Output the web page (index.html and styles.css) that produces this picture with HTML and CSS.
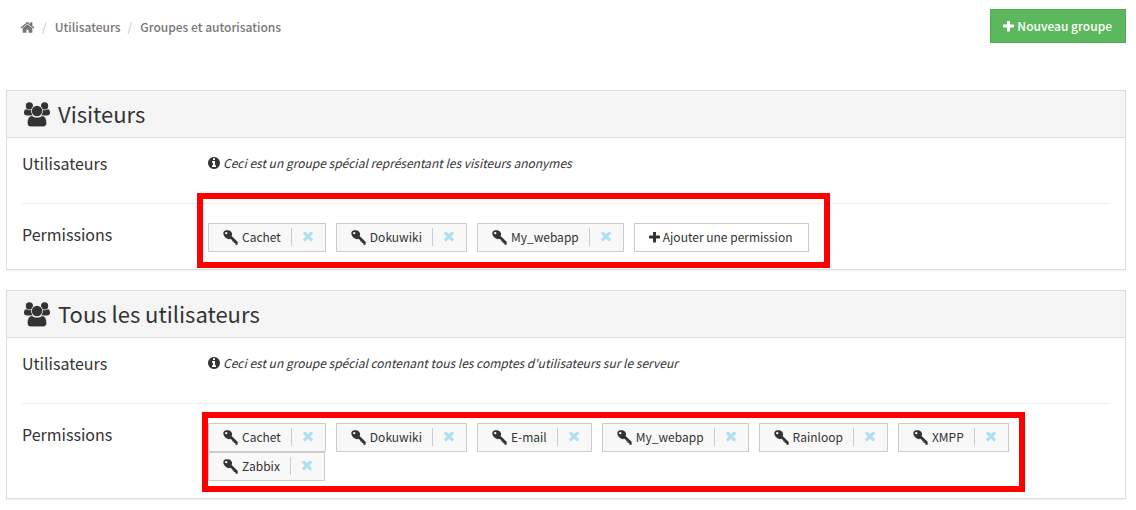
FILE: index.html
```html
<!DOCTYPE html>
<html lang="fr">
<head>
<meta charset="utf-8">
<meta name="viewport" content="width=device-width, initial-scale=1">
<title>Groupes et autorisations</title>
<link rel="stylesheet" href="styles.css">
</head>
<body>
<svg class="sprite" aria-hidden="true">
  <symbol id="home" viewBox="0 0 1792 1792"><path d="M1472 992v480q0 26-19 45t-45 19h-384v-384h-256v384h-384q-26 0-45-19t-19-45v-480q0-1 .5-3t.5-3l575-474 575 474q1 2 1 6zm223-69l-62 74q-8 9-21 11h-3q-13 0-21-7l-692-577-692 577q-12 8-24 7-13-2-21-11l-62-74q-8-10-7-23.500t11-21.500l719-599q32-26 76-26t76 26l244 204v-195q0-14 9-23t23-9h192q14 0 23 9t9 23v408l219 182q10 8 11 21.500t-7 23.500z"/></symbol>
  <symbol id="plus" viewBox="192 192 1408 1408"><path d="M1600 736v192q0 40-28 68t-68 28h-416v416q0 40-28 68t-68 28h-192q-40 0-68-28t-28-68v-416h-416q-40 0-68-28t-28-68v-192q0-40 28-68t68-28h416v-416q0-40 28-68t68-28h192q40 0 68 28t28 68v416h416q40 0 68 28t28 68z"/></symbol>
  <symbol id="times" viewBox="302 434 1188 1188"><path d="M1490 1322q0 40-28 68l-136 136q-28 28-68 28t-68-28l-294-294-294 294q-28 28-68 28t-68-28l-136-136q-28-28-28-68t28-68l294-294-294-294q-28-28-28-68t28-68l136-136q28-28 68-28t68 28l294 294 294-294q28-28 68-28t68 28l136 136q28 28 28 68t-28 68l-294 294 294 294q28 28 28 68z"/></symbol>
  <symbol id="info" viewBox="128 128 1536 1536"><path d="M1152 1376v-160q0-14-9-23t-23-9h-96v-512q0-14-9-23t-23-9h-320q-14 0-23 9t-9 23v160q0 14 9 23t23 9h96v320h-96q-14 0-23 9t-9 23v160q0 14 9 23t23 9h448q14 0 23-9t9-23zm-128-896v-160q0-14-9-23t-23-9h-192q-14 0-23 9t-9 23v160q0 14 9 23t23 9h192q14 0 23-9t9-23zm640 416q0 209-103 385.500t-279.500 279.500-385.500 103-385.500-103-279.500-279.500-103-385.500 103-385.500 279.500-279.500 385.500-103 385.500 103 279.500 279.500 103 385.500z"/></symbol>
  <symbol id="key" viewBox="0 0 15 15"><path fill-rule="evenodd" d="M4.200.3C6.300-.2 8.600 1.300 9 3.600c.2.900 0 1.600-.4 2.300l5.700 5.700c.4.400.4.600.4 1v1.300c0 .6-.3.800-.8.800h-1c-.5 0-.6-.2-.6-.6v-1l-1.100-.1c-.4 0-.5-.2-.5-.6v-.9l-1-.1c-.4 0-.5-.2-.5-.6v-.7L7 8.700C5.900 9.600 4.100 9 2.500 7.600.5 5.700-.2 3.200.7 1.700 1.400.6 2.800.4 4.200.3ZM3.200 1.900a1.200 1.200 0 1 0 .1 2.400 1.200 1.200 0 0 0-.1-2.400Z"/></symbol>
  <symbol id="group" viewBox="0 0 26 25"><circle cx="5.400" cy="3.900" r="3.600"/><circle cx="20.600" cy="3.900" r="3.600"/><path d="M2 7.200c2 1.200 4.500 1.400 6 .6-.6 2.400-.2 4.200 1 5.600H3.200C1 13.400 0 12.400 0 10.800 0 9 .5 7.200 2 7.200ZM24 7.200c-2 1.200-4.500 1.400-6 .6.6 2.400.2 4.200-1 5.600h5.800c2.200 0 3.200-1 3.200-2.600 0-1.800-.5-3.600-2-3.600Z"/><circle cx="13" cy="9" r="5.900" fill="#f5f5f5"/><circle cx="13" cy="9" r="5.200"/><path stroke="#f5f5f5" stroke-width=".6" d="M8 13.700c3 2.200 7 2.200 10 0 3.400 0 4.700 4 4.700 7.400 0 2.300-1.400 3.700-3.700 3.700H7c-2.300 0-3.700-1.400-3.700-3.700 0-3.400 1.300-7.400 4.700-7.400Z"/></symbol>
</svg>

<header class="topbar">
  <nav aria-label="Fil d'Ariane">
    <ol class="breadcrumb">
      <li><a href="#" aria-label="Accueil"><svg class="icon-home"><use href="#home"/></svg></a></li>
      <li><a href="#">Utilisateurs</a></li>
      <li><a href="#">Groupes et autorisations</a></li>
    </ol>
  </nav>
  <button class="btn-new" type="button"><svg class="icon-plus"><use href="#plus"/></svg>Nouveau groupe</button>
</header>

<main>
  <section class="panel">
    <h2 class="panel-heading"><svg class="icon-group"><use href="#group"/></svg>Visiteurs</h2>
    <div class="panel-body">
      <div class="row">
        <h3 class="label">Utilisateurs</h3>
        <p class="note"><svg class="icon-info"><use href="#info"/></svg><em>Ceci est un groupe spécial représentant les visiteurs anonymes</em></p>
      </div>
      <hr class="divider">
      <div class="row">
        <h3 class="label">Permissions</h3>
        <div class="permissions">
          <span class="chip"><svg class="icon-key"><use href="#key"/></svg>Cachet<button class="remove" type="button" aria-label="Retirer Cachet"><svg class="icon-times"><use href="#times"/></svg></button></span>
          <span class="chip"><svg class="icon-key"><use href="#key"/></svg>Dokuwiki<button class="remove" type="button" aria-label="Retirer Dokuwiki"><svg class="icon-times"><use href="#times"/></svg></button></span>
          <span class="chip"><svg class="icon-key"><use href="#key"/></svg>My_webapp<button class="remove" type="button" aria-label="Retirer My_webapp"><svg class="icon-times"><use href="#times"/></svg></button></span>
          <button class="btn-add" type="button"><svg class="icon-plus"><use href="#plus"/></svg>Ajouter une permission</button>
          <span class="highlight highlight-visitors"></span>
        </div>
      </div>
    </div>
  </section>

  <section class="panel">
    <h2 class="panel-heading"><svg class="icon-group"><use href="#group"/></svg>Tous les utilisateurs</h2>
    <div class="panel-body">
      <div class="row">
        <h3 class="label">Utilisateurs</h3>
        <p class="note"><svg class="icon-info"><use href="#info"/></svg><em>Ceci est un groupe spécial contenant tous les comptes d'utilisateurs sur le serveur</em></p>
      </div>
      <hr class="divider">
      <div class="row">
        <h3 class="label">Permissions</h3>
        <div class="permissions">
          <span class="chip"><svg class="icon-key"><use href="#key"/></svg>Cachet<button class="remove" type="button" aria-label="Retirer Cachet"><svg class="icon-times"><use href="#times"/></svg></button></span>
          <span class="chip"><svg class="icon-key"><use href="#key"/></svg>Dokuwiki<button class="remove" type="button" aria-label="Retirer Dokuwiki"><svg class="icon-times"><use href="#times"/></svg></button></span>
          <span class="chip"><svg class="icon-key"><use href="#key"/></svg>E-mail<button class="remove" type="button" aria-label="Retirer E-mail"><svg class="icon-times"><use href="#times"/></svg></button></span>
          <span class="chip"><svg class="icon-key"><use href="#key"/></svg>My_webapp<button class="remove" type="button" aria-label="Retirer My_webapp"><svg class="icon-times"><use href="#times"/></svg></button></span>
          <span class="chip"><svg class="icon-key"><use href="#key"/></svg>Rainloop<button class="remove" type="button" aria-label="Retirer Rainloop"><svg class="icon-times"><use href="#times"/></svg></button></span>
          <span class="chip"><svg class="icon-key"><use href="#key"/></svg>XMPP<button class="remove" type="button" aria-label="Retirer XMPP"><svg class="icon-times"><use href="#times"/></svg></button></span>
          <span class="chip"><svg class="icon-key"><use href="#key"/></svg>Zabbix<button class="remove" type="button" aria-label="Retirer Zabbix"><svg class="icon-times"><use href="#times"/></svg></button></span>
          <span class="highlight highlight-users"></span>
        </div>
      </div>
    </div>
  </section>
</main>
</body>
</html>
```
FILE: styles.css
```css
* {
  box-sizing: border-box;
}

body {
  margin: 0;
  padding: 9px 10px 10px 6px;
  background: #fff;
  color: #333;
  font-family: "Noto Sans CJK SC", "Noto Sans", sans-serif;
  font-size: 12px;
  line-height: 20px;
}

button {
  font: inherit;
  color: inherit;
  cursor: pointer;
}

svg {
  display: block;
  flex: none;
  fill: currentColor;
}

.sprite {
  position: absolute;
  width: 0;
  height: 0;
}

.icon-home { width: 15px; height: 15px; }
.icon-plus { width: 11px; height: 11px; }
.icon-times { width: 10px; height: 10px; }
.icon-info { width: 12px; height: 12px; }
.icon-key { width: 15px; height: 15px; }
.icon-group { width: 26px; height: 25px; }

.topbar {
  display: flex;
  align-items: center;
  justify-content: space-between;
  margin-bottom: 47px;
}

.breadcrumb {
  display: flex;
  align-items: center;
  margin: 0;
  padding: 2px 0 0 14px;
  list-style: none;
  color: #777;
  font-weight: 500;
}

.breadcrumb li {
  display: flex;
  align-items: center;
}

.breadcrumb li + li::before {
  content: "/";
  padding: 0 8px 0 7px;
  color: #ccc;
}

.breadcrumb a {
  color: inherit;
  text-decoration: none;
}

.btn-new {
  display: flex;
  align-items: center;
  gap: 3px;
  padding: 6px 13px 6px 12px;
  border: 1px solid #4cae4c;
  background: #5cb85c;
  color: #fff;
  font-weight: 500;
}

.panel {
  margin-bottom: 20px;
  border: 1px solid #ddd;
  background: #fff;
  box-shadow: 0 1px 1px rgba(0, 0, 0, 0.05);
}

.panel-heading {
  display: flex;
  align-items: flex-start;
  gap: 8px;
  margin: 0;
  padding: 11px 17px 10px;
  border-bottom: 1px solid #ddd;
  background: #f5f5f5;
  font-size: 22px;
  font-weight: 400;
  line-height: 22px;
}

.panel-body {
  padding: 15px 15px 17px;
}

.row {
  display: grid;
  grid-template-columns: 186px 1fr;
}

.label {
  margin: 0;
  font-size: 16px;
  font-weight: 400;
  line-height: 20px;
}

.note {
  display: flex;
  align-items: center;
  gap: 3px;
  margin: 0;
}

.divider {
  margin: 30px 0 19px;
  border: 0;
  border-top: 1px solid #eee;
}

.permissions {
  position: relative;
  display: flex;
  flex-wrap: wrap;
  column-gap: 10px;
}

.divider + .row .label {
  padding-top: 1px;
}

.chip,
.btn-add {
  display: flex;
  align-items: center;
  height: 29px;
  border: 1px solid #ccc;
}

.chip {
  gap: 4px;
  padding: 0 0 1px 14px;
  background: #f8f8f8;
}

.remove {
  margin-left: 6px;
  padding: 4px 12px 4px 11px;
  border: 0;
  border-left: 1px solid #ccc;
  background: none;
  color: #aee1ef;
}

.btn-add {
  gap: 3px;
  padding: 0 16px 1px 14px;
  background: #fff;
}

.highlight {
  position: absolute;
  border: 6px solid #f00;
  pointer-events: none;
}

.highlight-visitors {
  top: -30px;
  left: -11px;
  width: 633px;
  height: 75px;
}

.highlight-users {
  top: -11px;
  left: -6px;
  width: 823px;
  height: 80px;
}
```
